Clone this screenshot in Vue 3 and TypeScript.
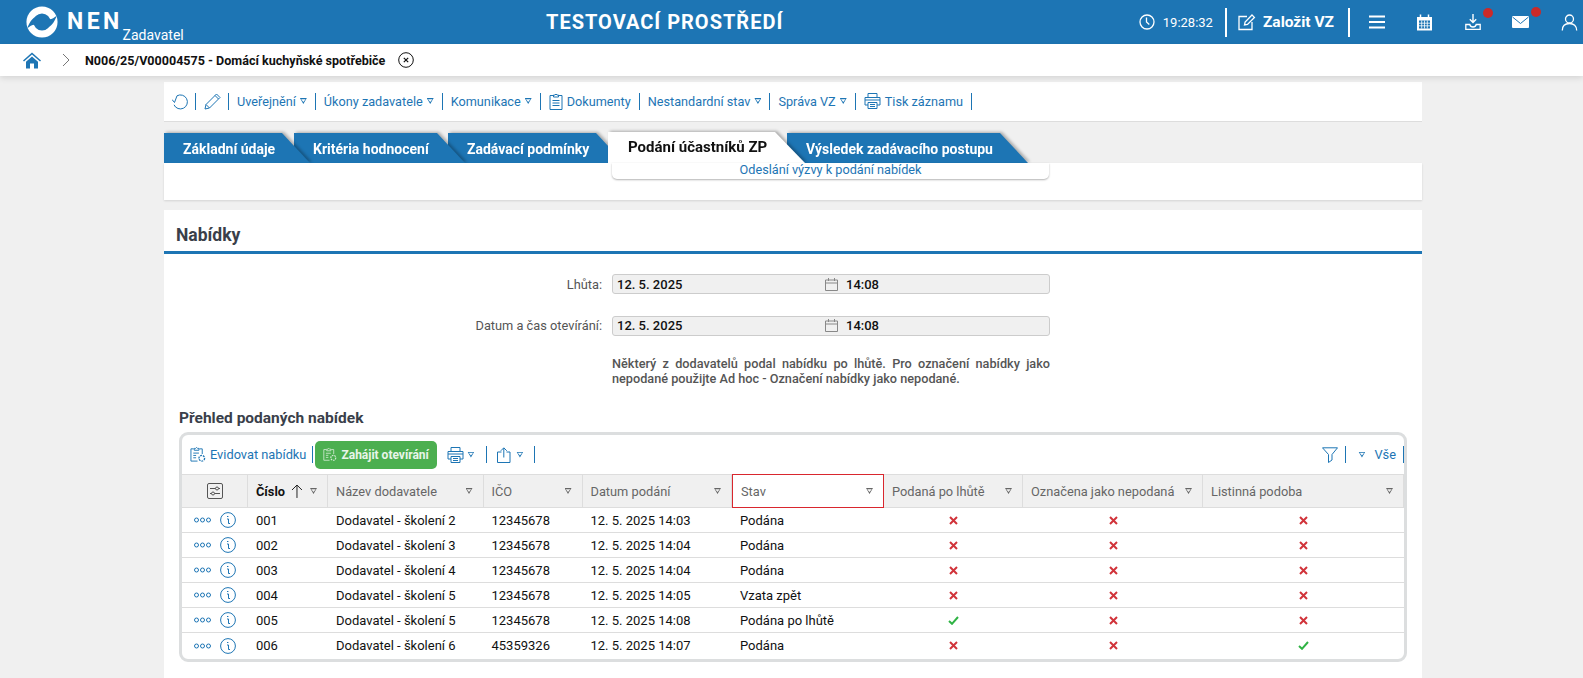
<script setup lang="ts">
interface Row { no: string; name: string; ico: string; date: string; stav: string; late: boolean; marked: boolean; paper: boolean }
const rows: Row[] = [
  { no: '001', name: 'Dodavatel - školení 2', ico: '12345678', date: '12. 5. 2025 14:03', stav: 'Podána', late: false, marked: false, paper: false },
  { no: '002', name: 'Dodavatel - školení 3', ico: '12345678', date: '12. 5. 2025 14:04', stav: 'Podána', late: false, marked: false, paper: false },
  { no: '003', name: 'Dodavatel - školení 4', ico: '12345678', date: '12. 5. 2025 14:04', stav: 'Podána', late: false, marked: false, paper: false },
  { no: '004', name: 'Dodavatel - školení 5', ico: '12345678', date: '12. 5. 2025 14:05', stav: 'Vzata zpět', late: false, marked: false, paper: false },
  { no: '005', name: 'Dodavatel - školení 5', ico: '12345678', date: '12. 5. 2025 14:08', stav: 'Podána po lhůtě', late: true, marked: false, paper: false },
  { no: '006', name: 'Dodavatel - školení 6', ico: '45359326', date: '12. 5. 2025 14:07', stav: 'Podána', late: false, marked: false, paper: true },
]
const tabs = ['Základní údaje', 'Kritéria hodnocení', 'Zadávací podmínky', 'Podání účastníků ZP', 'Výsledek zadávacího postupu']
const fields = [{ label: 'Lhůta:' }, { label: 'Datum a čas otevírání:' }]
</script>

<template>
  <div class="page">
    <header class="top">
      <div class="brand">
        <svg class="logo" viewBox="0 0 36 36" width="32" height="32">
          <circle cx="18" cy="18" r="17.500" fill="#fff" />
          <circle cx="18" cy="18" r="9.700" fill="#1d75b4" />
          <path d="M1.500 25 C4 17 9 12 14.500 9.800 C11 13 9.300 17 9.300 21 C7 21 4 23 1.500 25Z" fill="#1d75b4" />
          <path d="M1.500 25 C4 17 9 12 14.500 9.800 C11 13 9.300 17 9.300 21 C7 21 4 23 1.500 25Z" fill="#1d75b4" transform="rotate(180 18 18)" />
        </svg>
        <span class="nen">NEN</span>
        <span class="role">Zadavatel</span>
      </div>
      <div class="env">TESTOVACÍ PROSTŘEDÍ</div>
      <div class="tools">
        <svg class="clock" viewBox="0 0 16 16" width="16" height="16"><circle cx="8" cy="8" r="7" fill="none" stroke="#fff" stroke-width="1.300" /><path d="M7.500 3.600V8l2.800 2.600" fill="none" stroke="#fff" stroke-width="1.300" /></svg>
        <span class="time">19:28:32</span>
        <i class="hsep s1"></i>
        <svg class="newvz" viewBox="0 0 18 18" width="18" height="18"><path d="M9 3.500H1V16.500H14V9" fill="none" stroke="#fff" stroke-width="1.300" /><path d="M6.500 12l.6-3L14 2l2.400 2.400L9.500 11.400z" fill="none" stroke="#fff" stroke-width="1.300" /></svg>
        <span class="zalozit">Založit VZ</span>
        <i class="hsep s2"></i>
        <svg class="ham" viewBox="0 0 16 14" width="16" height="14"><path d="M0 1.500h16M0 7h16M0 12.500h16" stroke="#fff" stroke-width="2" /></svg>
        <svg class="cal" viewBox="0 0 17 17" width="17" height="17"><path d="M1 3h15v13.500H1z" fill="#fff" /><path d="M4.500 .5v3M12.500 .5v3" stroke="#fff" stroke-width="1.500" /><path d="M3 6.500h11v8H3z" fill="#1d75b4" /><path d="M3 9.200h11M3 11.800h11M5.700 6.500v8M8.500 6.500v8M11.300 6.500v8" stroke="#fff" stroke-width=".8" /></svg>
        <span class="notif dl">
          <svg viewBox="0 0 16 16" width="16" height="16"><path d="M8 0v8M4.800 5.200 8 8.500l3.200-3.300" fill="none" stroke="#fff" stroke-width="1.400" /><path d="M.8 10.500h4c.4 2 1.400 2.500 3.200 2.500s2.800-.5 3.200-2.500h4v5H.8z" fill="none" stroke="#fff" stroke-width="1.300" /></svg>
          <b class="dot"></b>
        </span>
        <span class="notif mail">
          <svg viewBox="0 0 17 12" width="17" height="12"><path d="M0 1q0-1 1-1h15q1 0 1 1v10q0 1-1 1H1q-1 0-1-1z" fill="#fff" /><path d="M.5 1 8.500 7.500 16.500 1" fill="none" stroke="#1d75b4" stroke-width="1" /></svg>
          <b class="dot"></b>
        </span>
        <svg class="user" viewBox="0 0 16 17" width="17" height="17"><circle cx="8" cy="5" r="4" fill="none" stroke="#fff" stroke-width="1.300" /><path d="M.8 16.500c0-4.500 3-7 7.200-7s7.200 2.500 7.200 7" fill="none" stroke="#fff" stroke-width="1.300" /></svg>
      </div>
    </header>

    <nav class="crumb">
      <svg class="home" viewBox="0 0 18 16" width="18" height="17"><path d="M9 0 0 8l1 1 8-7 8 7 1-1z" fill="#1d75b4" /><path d="M3 9.200 9 4l6 5.200V16h-4v-5H7v5H3z" fill="#1d75b4" /></svg>
      <svg class="chev" viewBox="0 0 8 14" width="8" height="14"><path d="M1 1l6 6-6 6" fill="none" stroke="#777" stroke-width="1" /></svg>
      <strong>N006/25/V00004575 - Domácí kuchyňské spotřebiče</strong>
      <svg class="closer" viewBox="0 0 16 16" width="16" height="16"><circle cx="8" cy="8" r="7.300" fill="none" stroke="#111" stroke-width="1" /><path d="M5.800 5.800l4.400 4.400M10.200 5.800l-4.400 4.400" stroke="#111" stroke-width="1.200" /></svg>
    </nav>

    <main class="content">
      <div class="actions">
        <svg class="a-undo" viewBox="0 0 17 17" width="17" height="17"><path d="M5 2.800A7 7 0 1 1 2 11.800" fill="none" stroke="#1d75b4" stroke-width="1" /><path d="M0 6.500 2.500 9.500 5 2.800" fill="none" stroke="#1d75b4" stroke-width="1" /></svg>
        <i class="vs"></i>
        <svg class="a-pen" viewBox="0 0 17 17" width="17" height="17"><path d="M1 16l1-4.500L12.500 1l3.500 3.500L5.500 15z" fill="none" stroke="#1d75b4" stroke-width="1" /><path d="M2 11.500 5.500 15M11 2.500 14.500 6" stroke="#1d75b4" stroke-width="1" /></svg>
        <i class="vs"></i>
        <span class="act">Uveřejnění<em class="tri"></em></span><i class="vs"></i>
        <span class="act">Úkony zadavatele<em class="tri"></em></span><i class="vs"></i>
        <span class="act">Komunikace<em class="tri"></em></span><i class="vs"></i>
        <span class="act">
          <svg viewBox="0 0 14 17" width="14" height="17"><path d="M4 2.500H1v14h12v-14h-3" fill="none" stroke="#1d75b4" stroke-width="1" /><path d="M4.500 4V2H6q1-2 2 0h1.500v2z" fill="none" stroke="#1d75b4" stroke-width="1" /><path d="M3.500 7.500h7M3.500 10h7M3.500 12.500h7" stroke="#1d75b4" stroke-width="1" /></svg>
          Dokumenty</span><i class="vs"></i>
        <span class="act">Nestandardní stav<em class="tri"></em></span><i class="vs"></i>
        <span class="act">Správa VZ<em class="tri"></em></span><i class="vs"></i>
        <span class="act">
          <svg viewBox="0 0 17 16" width="17" height="16"><path d="M4 4V.5h9V4M4 12H1V4.500h15V12h-3" fill="none" stroke="#1d75b4" stroke-width="1" /><path d="M4 9.500h9V15.500H4zM6 11.500h5M6 13.500h5M1 7h15" fill="none" stroke="#1d75b4" stroke-width="1" /></svg>
          Tisk záznamu</span><i class="vs"></i>
      </div>

      <div class="tabs">
        <div v-for="(t, i) in tabs" :key="t" class="tab" :class="['t' + i, { on: i === 3 }]"><div class="shape"><span>{{ t }}</span></div></div>
      </div>
      <section class="card-a">
        <div class="subtab">Odeslání výzvy k podání nabídek</div>
      </section>

      <section class="card-b">
        <h2>Nabídky</h2>
        <div class="form">
          <div v-for="f in fields" :key="f.label" class="frow">
            <label>{{ f.label }}</label>
            <div class="input">
              <span class="d">12. 5. 2025</span>
              <svg viewBox="0 0 13 13" width="13" height="13"><path d="M.5 2h12v10.500H.5zM.5 5h12M3.500 0v3M9.500 0v3" fill="none" stroke="#888" stroke-width="1" /></svg>
              <span class="t">14:08</span>
            </div>
          </div>
          <p class="note">Některý z dodavatelů podal nabídku po lhůtě. Pro označení nabídky jako nepodané použijte Ad hoc - Označení nabídky jako nepodané.</p>
        </div>
        <h3>Přehled podaných nabídek</h3>
        <div class="grid">
          <div class="gridbar">
            <span class="gact">
              <svg viewBox="0 0 17 17" width="16" height="17"><path d="M4 2.500H1v13h7M10 2.500h3V8" fill="none" stroke="#1d75b4" stroke-width="1" /><path d="M4.500 4V2H6q1-2 2 0h1.500v2zM3.500 7h6M3.500 9.500h3M3.500 12h3" fill="none" stroke="#1d75b4" stroke-width="1" /><circle cx="12.500" cy="12.500" r="3" fill="none" stroke="#1d75b4" stroke-width="1.400" stroke-dasharray="2 1" /></svg>
              Evidovat nabídku</span>
            <i class="vs"></i>
            <span class="green">
              <svg viewBox="0 0 17 17" width="14" height="15"><path d="M4 2.500H1v13h7M10 2.500h3V8" fill="none" stroke="#d5ecd6" stroke-width="1" /><path d="M4.500 4V2H6q1-2 2 0h1.500v2zM3.500 7h6M3.500 9.500h3M3.500 12h3" fill="none" stroke="#d5ecd6" stroke-width="1" /><circle cx="12.500" cy="12.500" r="3" fill="none" stroke="#d5ecd6" stroke-width="1.400" stroke-dasharray="2 1" /></svg>
              Zahájit otevírání</span>
            <span class="printb">
              <svg viewBox="0 0 17 16" width="17" height="16"><path d="M4 4V.5h9V4M4 12H1V4.500h15V12h-3" fill="none" stroke="#1d75b4" stroke-width="1" /><path d="M4 9.500h9V15.500H4zM6 11.500h5M6 13.500h5M1 7h15" fill="none" stroke="#1d75b4" stroke-width="1" /></svg>
              <em class="tri"></em></span>
            <i class="vs"></i>
            <span class="shareb">
              <svg viewBox="0 0 14 16" width="14" height="16"><path d="M4.500 5H.5v10.500h12.500V5H9.500" fill="none" stroke="#1d75b4" stroke-width="1" /><path d="M6.800 10.500V1M3.800 3.800 6.800.8l3 3" fill="none" stroke="#1d75b4" stroke-width="1" /></svg>
              <em class="tri"></em></span>
            <i class="vs"></i>
            <span class="spacer"></span>
            <svg class="funnel" viewBox="0 0 16 16" width="16" height="16"><path d="M.5 .8h15L10 7.500v5.500L6.500 15.500V7.500z" fill="none" stroke="#1d75b4" stroke-width="1" /></svg>
            <i class="vs"></i>
            <span class="all"><em class="tri"></em>Vše</span>
            <i class="vs"></i>
          </div>
          <table>
            <colgroup>
              <col class="c0" /><col class="c1" /><col class="c2" /><col class="c3" /><col class="c4" /><col class="c5" /><col class="c6" /><col class="c7" /><col class="c8" />
            </colgroup>
            <thead>
              <tr>
                <th class="cfg"><svg viewBox="0 0 16 16" width="16" height="16"><rect x=".5" y=".5" width="15" height="15" rx="1.500" fill="none" stroke="#555" stroke-width="1" /><path d="M3 5.500h10M3 10.500h10" stroke="#555" stroke-width="1" /><circle cx="10" cy="5.500" r="1.500" fill="#f0f0f0" stroke="#555" /><circle cx="6" cy="10.500" r="1.500" fill="#f0f0f0" stroke="#555" /></svg></th>
                <th class="sorted"><div class="hc"><b>Číslo</b><svg viewBox="0 0 12 14" width="12" height="14"><path d="M6 14V1M1 6l5-5 5 5" fill="none" stroke="#222" stroke-width="1" /></svg><em class="tri g"></em></div></th>
                <th><div class="hc"><span>Název dodavatele</span><em class="tri g"></em></div></th>
                <th><div class="hc"><span>IČO</span><em class="tri g"></em></div></th>
                <th><div class="hc"><span>Datum podání</span><em class="tri g"></em></div></th>
                <th class="hl"><div class="hc"><span>Stav</span><em class="tri g"></em></div></th>
                <th><div class="hc"><span>Podaná po lhůtě</span><em class="tri g"></em></div></th>
                <th><div class="hc"><span>Označena jako nepodaná</span><em class="tri g"></em></div></th>
                <th><div class="hc"><span>Listinná podoba</span><em class="tri g"></em></div></th>
              </tr>
            </thead>
            <tbody>
              <tr v-for="r in rows" :key="r.no">
                <td class="ops">
                  <svg viewBox="0 0 17 6" width="17" height="6"><circle cx="2.500" cy="3" r="2" fill="none" stroke="#1d75b4" /><circle cx="8.500" cy="3" r="2" fill="none" stroke="#1d75b4" /><circle cx="14.500" cy="3" r="2" fill="none" stroke="#1d75b4" /></svg>
                  <svg viewBox="0 0 16 16" width="16" height="16"><circle cx="8" cy="8" r="7.400" fill="none" stroke="#1d75b4" stroke-width="1" /><path d="M7 4.500h1.400M7 7h1.500v4.500H10" fill="none" stroke="#1d75b4" stroke-width="1" /></svg>
                </td>
                <td>{{ r.no }}</td>
                <td>{{ r.name }}</td>
                <td>{{ r.ico }}</td>
                <td>{{ r.date }}</td>
                <td>{{ r.stav }}</td>
                <td v-for="(v, k) in [r.late, r.marked, r.paper]" :key="k" class="mark">
                  <svg v-if="v" viewBox="0 0 11 9" width="11" height="9"><path d="M1 5l3 2.800L10 1" fill="none" stroke="#2fb344" stroke-width="2" /></svg>
                  <svg v-else viewBox="0 0 9 9" width="9" height="9"><path d="M1 1l7 7M8 1 1 8" fill="none" stroke="#d1333a" stroke-width="2" /></svg>
                </td>
              </tr>
            </tbody>
          </table>
        </div>
      </section>
    </main>
  </div>
</template>

<style>
html, body { margin: 0; background: #f0f0f0; overflow: hidden; }
</style>

<style scoped>
.page { width: 1583px; height: 678px; overflow: hidden; background: #f0f0f0; font-family: Roboto, "Liberation Sans", sans-serif; font-size: 13px; color: #111; }
em, i { font-style: normal; }

.top { height: 44px; background: #1d75b4; color: #fff; display: flex; align-items: center; }
.brand { display: flex; align-items: flex-start; height: 44px; width: 546px; box-sizing: border-box; padding-left: 26px; flex: none; }
.logo { margin-top: 6px; flex: none; }
.nen { font-size: 23px; font-weight: 700; letter-spacing: 3.400px; margin: 8px 0 0 9px; line-height: 27px; }
.role { font-size: 14px; margin: 27px 0 0 0; line-height: 16px; }
.env { font-size: 20px; font-weight: 700; letter-spacing: 1px; white-space: nowrap; }
.tools { display: flex; align-items: center; height: 44px; margin-left: auto; padding-right: 5px; }
.time { font-size: 13px; margin-left: 8px; }
.hsep { width: 2px; height: 29px; background: #fff; flex: none; }
.s1 { margin: 0 11px 0 12px; }
.s2 { margin: 0 19px 0 14px; }
.zalozit { font-size: 15.500px; font-weight: 700; margin-left: 7px; white-space: nowrap; }
.cal { margin-left: 31px; }
.notif { position: relative; display: flex; }
.dl { margin-left: 32px; }
.mail { margin-left: 31px; }
.user { margin-left: 32px; }
.dot { position: absolute; width: 10px; height: 10px; border-radius: 50%; background: #ca2a2a; top: -6px; right: -12px; }
.mail .dot { top: -9px; }

.crumb { height: 32px; background: #fff; box-shadow: 0 2px 6px rgba(0,0,0,.12); display: flex; align-items: center; padding-left: 23px; position: relative; z-index: 1; }
.chev { margin-left: 21px; }
.crumb strong { font-size: 12.550px; font-weight: 700; margin-left: 15px; color: #111; }
.closer { margin-left: 13px; }

.content { width: 1258px; margin: 6px 0 0 164px; }
.actions { height: 40px; background: #fff; border-bottom: 1px solid #ddd; display: flex; align-items: center; padding: 0 0 1px 8px; box-sizing: border-box; color: #1d75b4; font-size: 12.700px; }
.vs { display: inline-block; width: 1px; height: 17px; background: #1d75b4; margin: 0 8px; flex: none; }
.a-undo { margin-right: -2px; }
.a-pen { margin-right: -1px; }
.act { display: inline-flex; align-items: center; gap: 4px; white-space: nowrap; }
.tri { display: inline-block; flex: none; width: 7px; height: 6px; background: #1d75b4; clip-path: polygon(0 0, 100% 0, 50% 100%, 0 0, 18% 20%, 50% 66%, 82% 20%, 18% 20%); }
.tri.g { background: #666; }

.tabs { display: flex; height: 31px; margin-top: 10px; align-items: flex-end; }
.tab { position: relative; height: 30px; filter: drop-shadow(2px -1px 1.500px rgba(0,0,0,.28)); flex: none; }
.shape { height: 100%; background: #1d75b4; color: #fff; font-size: 14px; font-weight: 700; display: flex; align-items: center; padding: 1px 0 0 19px; box-sizing: border-box; clip-path: polygon(0 0, calc(100% - 28px) 0, 100% 100%, 0 100%); white-space: nowrap; }
.t0 { width: 146px; margin-right: -16px; z-index: 5; }
.t1 { width: 171px; margin-right: -17px; z-index: 4; }
.t2 { width: 176px; margin-right: -16px; z-index: 3; }
.t3 { width: 197px; height: 31px; margin-right: -18px; z-index: 6; }
.t4 { width: 241px; z-index: 1; }
.on .shape { background: #fff; color: #111; font-size: 15px; padding: 0 0 1px 20px; clip-path: polygon(0 0, calc(100% - 30px) 0, 100% 100%, 0 100%); }
.card-a { height: 37px; background: #fff; box-shadow: 0 1px 2px rgba(0,0,0,.12); padding-left: 448px; box-sizing: border-box; position: relative; z-index: 7; }
.subtab { width: 437px; height: 16px; background: #fff; border-radius: 0 0 5px 5px; box-shadow: 0 1px 2px rgba(0,0,0,.3); color: #1d75b4; font-size: 12.700px; line-height: 13px; text-align: center; }
.card-b { height: 470px; margin-top: 10px; background: #fff; }
h2 { margin: 0; height: 41px; border-bottom: 3px solid #1d75b4; box-sizing: content-box; font-size: 17.500px; font-weight: 700; color: #3a3f4a; line-height: 50px; padding-left: 12px; }
.form { padding-top: 20px; }
.frow { display: flex; align-items: center; height: 20px; margin-bottom: 21.500px; }
.frow label { width: 438px; text-align: right; color: #555; font-size: 12.800px; }
.input { margin-left: 10px; width: 438px; height: 20px; background: #f0f0f0; border: 1px solid #ccc; border-radius: 3px; box-sizing: border-box; display: flex; align-items: center; padding-left: 4px; font-size: 13px; font-weight: 500; color: #111; }
.input .d { width: 208px; }
.input svg { margin-right: 8px; }
.note { width: 438px; margin: 0 0 0 448px; color: #555; font-size: 12.700px; font-weight: 500; line-height: 14.500px; text-align: justify; }
h3 { margin: 24px 0 0 15px; font-size: 15.500px; font-weight: 700; color: #3a3f4a; line-height: 17px; }
.grid { margin: 5px 0 0 15px; width: 1228px; border: 3px solid #dcdedf; border-radius: 9px; box-sizing: border-box; overflow: hidden; height: 230px; }
.gridbar { height: 39px; display: flex; align-items: center; color: #1d75b4; padding-left: 8px; box-sizing: border-box; font-size: 12.800px; }
.gridbar .vs { margin: 0; }
.gact { display: inline-flex; align-items: center; gap: 4px; margin-right: 6px; white-space: nowrap; }
.green { display: inline-flex; align-items: center; gap: 4px; height: 28px; width: 122px; margin-left: 2px; background: #4caf50; border-radius: 5px; color: #e8f5e9; font-weight: 700; font-size: 12px; padding-left: 8px; box-sizing: border-box; white-space: nowrap; flex: none; }
.printb { display: inline-flex; align-items: center; gap: 3px; margin: 0 12px 0 10px; }
.shareb { display: inline-flex; align-items: center; gap: 5px; margin: 0 11px 0 10px; }
.spacer { flex: 1; }
.funnel { margin-right: 7px; }
.all { display: inline-flex; align-items: center; gap: 9px; margin: 0 7px 0 12px; }
table { border-collapse: separate; border-spacing: 0; table-layout: fixed; width: 1222px; }
.c0 { width: 66px; } .c1 { width: 80px; } .c2 { width: 155.500px; } .c3 { width: 99px; } .c4 { width: 149.500px; } .c5 { width: 152px; } .c6 { width: 139px; } .c7 { width: 180px; } .c8 { width: 201px; }
th { height: 34px; background: #f0f0f0; border-top: 1px solid #ddd; border-bottom: 1px solid #ddd; border-right: 1px solid #ddd; box-sizing: border-box; padding: 0 10px 0 8px; font-weight: 400; color: #666; font-size: 12.800px; text-align: left; white-space: nowrap; }
th.cfg { padding: 0; }
th.cfg svg { display: block; margin: 0 auto; }
.hc { display: flex; align-items: center; justify-content: space-between; }
th.sorted .hc { justify-content: flex-start; }
th.sorted b { color: #111; }
th.sorted svg { margin-left: 6px; }
th.sorted em { margin-left: 7px; }
th.hl { background: #fff; border: 1px solid #d9272e; }
td { height: 25px; border-bottom: 1px solid #ddd; box-sizing: border-box; padding: 0 0 0 8px; font-size: 13px; color: #111; white-space: nowrap; }
tbody tr:last-child td { border-bottom: 0; }
td.ops { padding: 0 0 0 12px; }
td.ops svg { vertical-align: middle; }
td.ops svg + svg { margin-left: 9px; }
td.mark { padding: 0; }
td.mark svg { display: block; margin: 0 auto; }
</style>
